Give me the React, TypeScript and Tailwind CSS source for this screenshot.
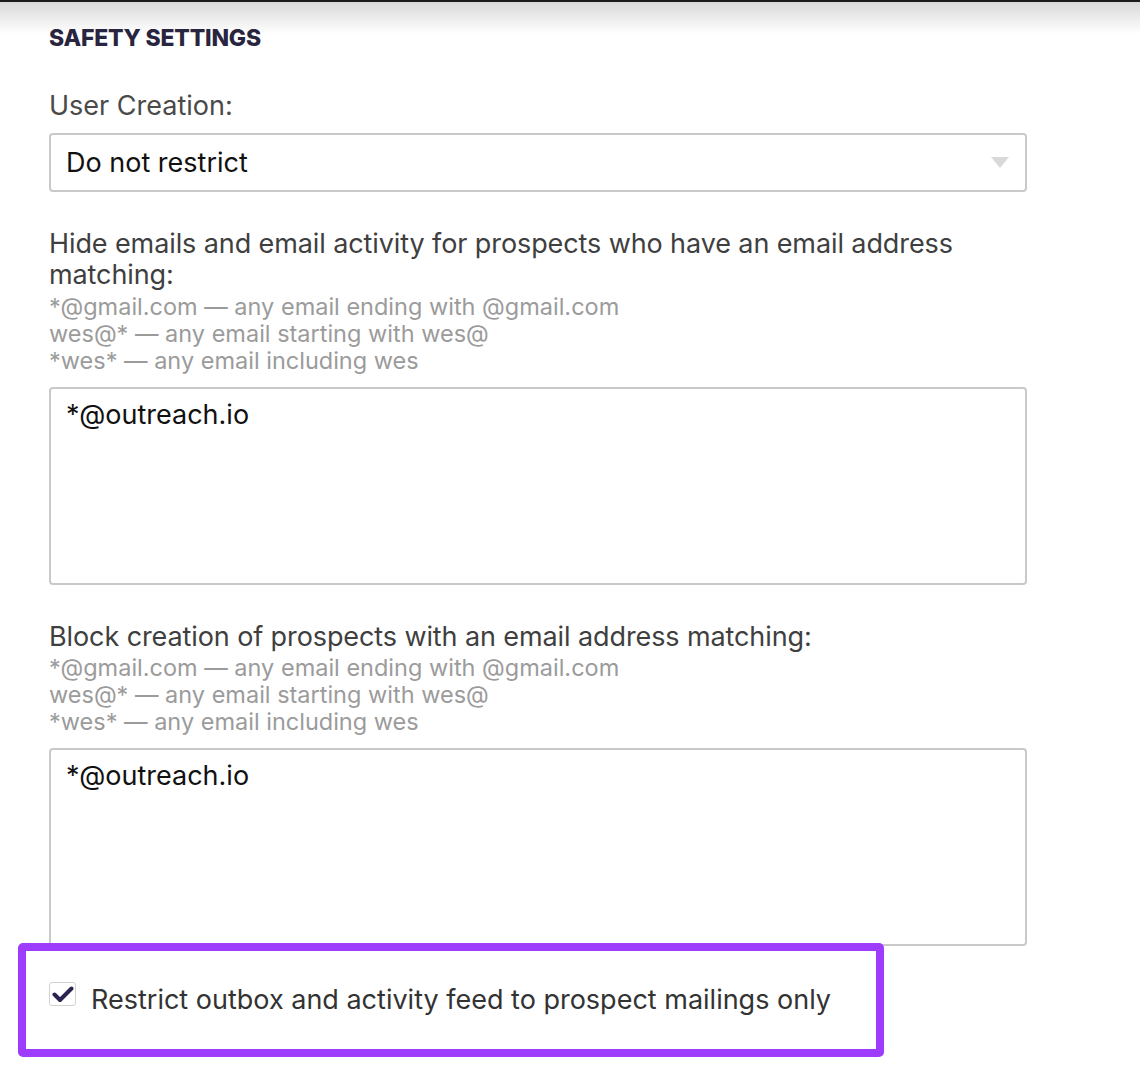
import React from "react";

function Hints({ top }: { top: "a" | "b" }) {
  return (
    <div
      className={
        top === "a"
          ? "mt-[3px] text-[23.5px] leading-[27px] text-[#9b9b9b]"
          : "mt-[2px] text-[23.5px] leading-[27px] text-[#9b9b9b]"
      }
    >
      <div>*@gmail.com — any email ending with @gmail.com</div>
      <div>wes@* — any email starting with wes@</div>
      <div>*wes* — any email including wes</div>
    </div>
  );
}

function Area() {
  return (
    <div className="mt-[13.5px] h-[198px] w-[978px] rounded-[4px] border-2 border-[#c9c9c9] bg-white px-[15px] pt-[10px] text-[27px] leading-[31px] text-[#111111]">
      *@outreach.io
    </div>
  );
}

export default function App() {
  return (
    <div
      className="relative min-h-[1074px] w-[1140px] overflow-hidden bg-white"
      style={{ fontFamily: "Inter, 'Liberation Sans', sans-serif" }}
    >
      <div className="h-[2px] bg-[#1c1c1c]" />
      <div className="h-[32px] bg-gradient-to-b from-[#d9d9d9] to-white" />
      <div className="-mt-[34px] pl-[49px] pt-[24px]">
        <h2 className="text-[23px] font-extrabold leading-[28px] tracking-[-0.2px] text-[#29253f]">
          SAFETY SETTINGS
        </h2>

        <div className="mt-[38px] text-[27px] leading-[31px] text-[#4a4a4a]">User Creation:</div>
        <div className="mt-[12px] flex h-[59px] w-[978px] items-center justify-between rounded-[4px] border-2 border-[#c9c9c9] bg-white pl-[15px] pr-[16px]">
          <span className="text-[27px] leading-[31px] text-[#111111]">Do not restrict</span>
          <svg width="18" height="11" viewBox="0 0 18 11">
            <path d="M0 0 H18 L9 11 Z" fill="#d9d9d9" />
          </svg>
        </div>

        <div className="mt-[35.5px] w-[978px] text-[27px] leading-[31px] tracking-[-0.1px] text-[#3f3f3f]">
          Hide emails and email activity for prospects who have an email address matching:
        </div>
        <Hints top="a" />
        <Area />

        <div className="mt-[35.5px] text-[27px] leading-[31px] tracking-[-0.1px] text-[#3f3f3f]">
          Block creation of prospects with an email address matching:
        </div>
        <Hints top="b" />
        <Area />

        <div className="relative mt-[38px] flex items-start gap-[15px] pb-[60px]">
          <div className="pointer-events-none absolute left-[-31px] top-[-41px] h-[114px] w-[866px] rounded-[5px] border-[8px] border-[#9d3cfc]" />
          <div className="-mt-[2px] flex h-[24px] w-[27px] items-center justify-center rounded-[3px] border border-[#d2d2d2] bg-white">
            <svg width="22" height="18" viewBox="0 0 22 18">
              <path
                d="M2.5 9.5 L8 15 L19.5 3.5"
                fill="none"
                stroke="#2a2550"
                strokeWidth="4"
                strokeLinecap="round"
                strokeLinejoin="round"
              />
            </svg>
          </div>
          <span className="text-[27px] leading-[31px] text-[#333333]">
            Restrict outbox and activity feed to prospect mailings only
          </span>
        </div>
      </div>
    </div>
  );
}
